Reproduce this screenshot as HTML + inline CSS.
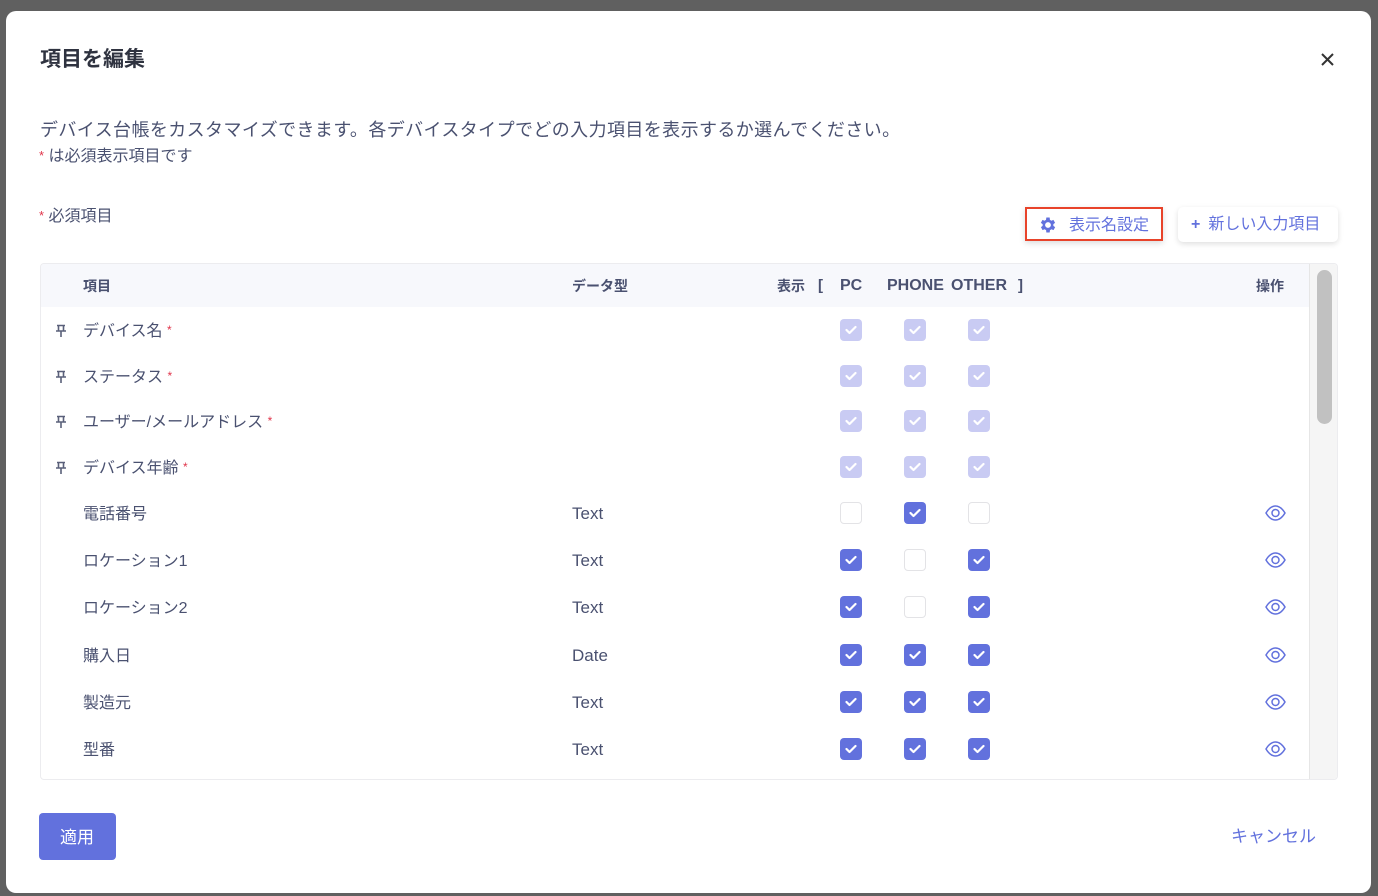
<!DOCTYPE html>
<html><head><meta charset="utf-8"><style>
*{box-sizing:border-box;margin:0;padding:0}
body{width:1378px;height:896px;background:#606060;font-family:"Liberation Sans","Noto Sans CJK JP",sans-serif;position:relative;overflow:hidden;color:#4a5170}
.modal{position:absolute;left:6px;top:11px;width:1365px;height:882px;background:#fff;border-radius:10px}
.a{position:absolute;white-space:nowrap;line-height:1}
.req{color:#e0344a}
.cb{position:absolute;width:22px;height:22px;border-radius:4px;transform:translate(-11px,-11px)}
.cb.d{background:#c9cbf3}
.cb.on{background:#6271dd}
.cb.off{border:1px solid #e3e3e6;background:#fff}
.cb svg{position:absolute;left:5px;top:6px}
.h{font-size:15px;font-weight:bold;top:277px}
</style></head><body>
<div class="modal">
<div class="a" style="left:34px;top:38px;font-size:21px;font-weight:bold;color:#2f3340">項目を編集</div>
<svg class="a" style="left:1315px;top:42px" width="13" height="13" viewBox="0 0 13 13"><path d="M1 1L12 12M12 1L1 12" stroke="#333" stroke-width="2"/></svg>
<div class="a" style="left:34px;top:110px;font-size:18px;letter-spacing:0.4px">デバイス台帳をカスタマイズできます。各デバイスタイプでどの入力項目を表示するか選んでください。</div>
<div class="a" style="left:33px;top:138px;font-size:16px"><span class="req" style="font-size:13px;vertical-align:top">*</span> は必須表示項目です</div>
<div class="a" style="left:33px;top:198px;font-size:16px"><span class="req" style="font-size:13px;vertical-align:top">*</span> 必須項目</div>
<div class="a" style="left:1019px;top:196px;width:138px;height:34px;border:2px solid #e8432a;box-shadow:0 2px 6px rgba(0,0,0,.15);font-size:16px;color:#6271dd;padding:9px 0 0 42px;line-height:1">表示名設定
<svg style="position:absolute;left:11px;top:6px" width="20" height="20" viewBox="0 0 24 24"><path fill="#6271dd" d="M19.4 13a7.5 7.5 0 000-2l2.1-1.6-2-3.5-2.5 1a7.6 7.6 0 00-1.7-1L15 3h-4l-.4 2.9a7.6 7.6 0 00-1.7 1l-2.5-1-2 3.5L6.6 11a7.5 7.5 0 000 2l-2.1 1.6 2 3.5 2.5-1a7.6 7.6 0 001.7 1L11 21h4l.4-2.9a7.6 7.6 0 001.7-1l2.5 1 2-3.5zM13 15.5a3.5 3.5 0 110-7 3.5 3.5 0 010 7z" transform="translate(-1 0)"/></svg></div>
<div class="a" style="left:1172px;top:196px;width:160px;height:35px;border-radius:5px;box-shadow:0 2px 6px rgba(0,0,0,.13);font-size:16px;color:#6271dd;padding:10px 0 0 13px"><span style="font-weight:bold;margin-right:8px">+</span>新しい入力項目</div>
<div class="a" style="left:34px;top:252px;width:1298px;height:517px;border:1px solid #ececef;border-radius:4px;overflow:hidden">
 <div class="a" style="left:0;top:0;width:1268px;height:43px;background:#f7f8fc"></div>
 <div class="a" style="left:1268px;top:0;width:30px;height:517px;background:#f5f5f5;border-left:1px solid #e6e6e6"></div>
 <div class="a" style="left:1276px;top:6px;width:15px;height:154px;border-radius:8px;background:#c1c1c1"></div>
</div>
<div class="a" style="left:77px;top:268px;font-size:14px;font-weight:bold">項目</div>
<div class="a" style="left:566px;top:268px;font-size:14px;font-weight:bold">データ型</div>
<div class="a" style="left:771px;top:268px;font-size:14px;font-weight:bold">表示</div>
<div class="a h" style="left:812px;top:267px">[</div>
<div class="a h" style="left:834px;top:267px;font-size:16px">PC</div>
<div class="a h" style="left:881px;top:267px;font-size:16px">PHONE</div>
<div class="a h" style="left:945px;top:267px;font-size:16px">OTHER</div>
<div class="a h" style="left:1012px;top:267px">]</div>
<div class="a" style="left:1250px;top:268px;font-size:14px;font-weight:bold">操作</div>
<div id="rows"></div>
<div class="a" style="left:33px;top:802px;width:77px;height:47px;border-radius:4px;background:#6271dd;color:#fff;font-size:17px;padding:16px 0 0 21px">適用</div>
<div class="a" style="left:1225px;top:817px;font-size:17px;color:#6271dd">キャンセル</div>
</div>
<script>
var rows=[["デバイス名",1,"",["d","d","d"],319],["ステータス",1,"",["d","d","d"],365],["ユーザー/メールアドレス",1,"",["d","d","d"],410],["デバイス年齢",1,"",["d","d","d"],456],
["電話番号",0,"Text",["off","on","off"],502],["ロケーション1",0,"Text",["on","off","on"],549],["ロケーション2",0,"Text",["on","off","on"],596],["購入日",0,"Date",["on","on","on"],644],["製造元",0,"Text",["on","on","on"],691],["型番",0,"Text",["on","on","on"],738]];
var h="",xs=[845,909,973];
var ck='<svg width="12" height="10" viewBox="0 0 12 10"><path d="M1.5 5l3 3 6-6" stroke="#fff" stroke-width="2.2" fill="none" stroke-linecap="round" stroke-linejoin="round"/></svg>';
var pin='<svg width="12" height="14" viewBox="0 0 12 14"><path d="M2 1.5H10M3.5 1.5V6.5M8.5 1.5V6.5M1 7H11M6 7V13" stroke="#5a607a" stroke-width="1.6" fill="none"/></svg>';
rows.forEach(function(r){var y=r[4];
 if(r[1])h+='<div class="a" style="left:49px;top:'+(y-6)+'px">'+pin+'</div>';
 h+='<div class="a" style="left:77px;top:'+(y-6)+'px;font-size:16px">'+r[0]+(r[1]?' <span class="req" style="font-size:12px;vertical-align:top">*</span>':'')+'</div>';
 if(r[2])h+='<div class="a" style="left:566px;top:'+(y-8)+'px;font-size:17px">'+r[2]+'</div>';
 r[3].forEach(function(c,i){h+='<div class="cb '+c+'" style="left:'+xs[i]+'px;top:'+y+'px">'+(c!="off"?ck:'')+'</div>';});
 if(!r[1])h+='<svg class="a" style="left:1259px;top:'+(y-8)+'px" width="21" height="16" viewBox="0 0 21 16"><path d="M1 8C4 3 7.5 1 10.5 1S17 3 20 8C17 13 13.5 15 10.5 15S4 13 1 8Z" fill="none" stroke="#6271dd" stroke-width="1.5"/><circle cx="10.5" cy="8" r="3.5" fill="none" stroke="#6271dd" stroke-width="1.5"/></svg>';
});
document.getElementById("rows").innerHTML=h;
</script>
</body></html>
